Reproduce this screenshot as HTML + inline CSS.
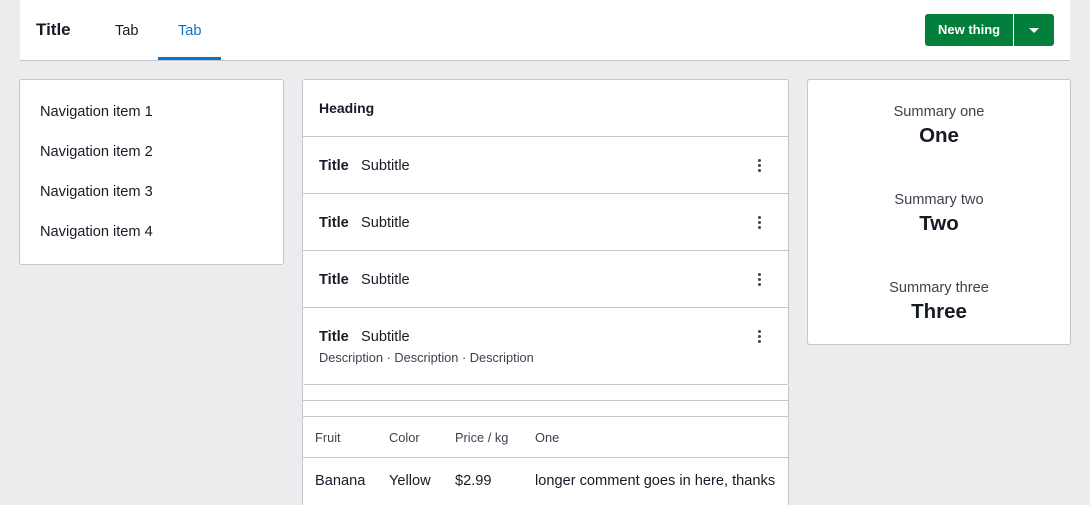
<!DOCTYPE html>
<html><head><style>
*{box-sizing:border-box;margin:0;padding:0}
html,body{width:1090px;height:505px;overflow:hidden}
body{background:#ebecee;font-family:"Liberation Sans",sans-serif;color:#161b26;position:relative}
.hdr{position:absolute;left:20px;top:0;width:1050px;height:61px;background:#fff;border-bottom:1px solid #c4c6cc}
.abs{position:absolute}
.card{position:absolute;background:#fff;border:1px solid #c4c6cc;border-radius:3px}
.nav div{position:absolute;left:20px;font-size:14.6px}
.row{position:absolute;left:0;right:0;border-top:1px solid #c4c6cc}
.row b{position:absolute;left:16px;top:21px;font-size:14.6px}
.row span{position:absolute;left:58px;top:21px;font-size:14.6px}
.dots{position:absolute;right:27px;top:22px;width:3px}
.dots i{display:block;width:3px;height:3px;border-radius:50%;background:#444;margin-bottom:2px}
.sum div{position:absolute;left:0;right:0;text-align:center}
.s1{font-size:14.6px;color:#3d4250}
.s2{font-size:20.5px;font-weight:bold}
</style></head><body>
<div class="hdr">
 <div class="abs" style="left:16px;top:20px;font-size:17px;font-weight:bold">Title</div>
 <div class="abs" style="left:95px;top:23px;font-size:14.6px">Tab</div>
 <div class="abs" style="left:158px;top:23px;font-size:14.6px;color:#0a74c8">Tab</div>
 <div class="abs" style="left:138px;top:57px;width:63px;height:3px;background:#0a74c8"></div>
 <div class="abs" style="left:905px;top:14px;width:129px;height:32px;background:#037f3c;border-radius:3px"></div>
 <div class="abs" style="left:993px;top:14px;width:1px;height:32px;background:#fff"></div>
 <div class="abs" style="left:918px;top:22px;font-size:13px;font-weight:bold;color:#fff">New thing</div>
 <div class="abs" style="left:1009px;top:28px;width:0;height:0;border-left:5px solid transparent;border-right:5px solid transparent;border-top:5px solid #fff"></div>
</div>
<div class="card nav" style="left:19px;top:79px;width:265px;height:186px">
 <div style="top:24px">Navigation item 1</div>
 <div style="top:64px">Navigation item 2</div>
 <div style="top:104px">Navigation item 3</div>
 <div style="top:144px">Navigation item 4</div>
</div>
<div class="card" style="left:302px;top:79px;width:487px;height:306px">
 <div class="abs" style="left:16px;top:20px;font-size:14px;font-weight:bold">Heading</div>
 <div class="row" style="top:56px;height:57px"><b>Title</b><span>Subtitle</span><div class="dots"><i></i><i></i><i></i></div></div>
 <div class="row" style="top:113px;height:57px"><b>Title</b><span>Subtitle</span><div class="dots"><i></i><i></i><i></i></div></div>
 <div class="row" style="top:170px;height:57px"><b>Title</b><span>Subtitle</span><div class="dots"><i></i><i></i><i></i></div></div>
 <div class="row" style="top:227px;height:77px"><b>Title</b><span>Subtitle</span><div class="dots"><i></i><i></i><i></i></div>
  <div class="abs" style="left:16px;top:42px;font-size:12.8px;color:#3d4250">Description · Description · Description</div></div>
</div>
<div class="abs" style="left:302px;top:385px;width:487px;height:32px;background:#fff;border-left:1px solid #c4c6cc;border-right:1px solid #c4c6cc"></div>
<div class="abs" style="left:302px;top:400px;width:487px;height:1px;background:#c4c6cc"></div>
<div class="card" style="left:302px;top:416px;width:487px;height:100px">
 <div class="abs" style="left:12px;top:13px;font-size:12.8px;color:#3d4250">Fruit</div>
 <div class="abs" style="left:86px;top:13px;font-size:12.8px;color:#3d4250">Color</div>
 <div class="abs" style="left:152px;top:13px;font-size:12.8px;color:#3d4250">Price / kg</div>
 <div class="abs" style="left:232px;top:13px;font-size:12.8px;color:#3d4250">One</div>
 <div class="abs" style="left:0;right:0;top:40px;height:1px;background:#c4c6cc"></div>
 <div class="abs" style="left:12px;top:56px;font-size:14.6px">Banana</div>
 <div class="abs" style="left:86px;top:56px;font-size:14.6px">Yellow</div>
 <div class="abs" style="left:152px;top:56px;font-size:14.6px">$2.99</div>
 <div class="abs" style="left:232px;top:56px;font-size:14.6px">longer comment goes in here, thanks</div>
</div>
<div class="card sum" style="left:807px;top:79px;width:264px;height:266px">
 <div class="s1" style="top:24px">Summary one</div>
 <div class="s2" style="top:44px">One</div>
 <div class="s1" style="top:112px">Summary two</div>
 <div class="s2" style="top:132px">Two</div>
 <div class="s1" style="top:200px">Summary three</div>
 <div class="s2" style="top:220px">Three</div>
</div>
</body></html>
